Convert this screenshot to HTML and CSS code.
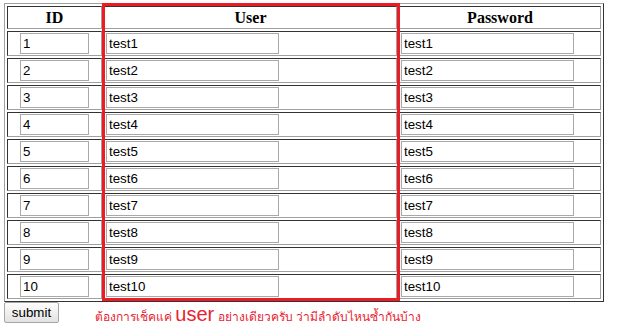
FILE: index.html
```html
<!DOCTYPE html>
<html lang="th">
<head>
    <meta charset="UTF-8">
    <title>check user</title>
    <link rel="stylesheet" href="styles.css">
</head>
<body>
    <form class="page">
        <table class="grid">
            <colgroup>
                <col class="col-id">
                <col class="col-user">
                <col class="col-pass">
            </colgroup>
            <tr>
                <th>ID</th>
                <th>User</th>
                <th>Password</th>
            </tr>
            <tr><td class="c-id"><input class="in-id" value="1"></td><td><input class="in-text" value="test1"></td><td><input class="in-text" value="test1"></td></tr>
            <tr><td class="c-id"><input class="in-id" value="2"></td><td><input class="in-text" value="test2"></td><td><input class="in-text" value="test2"></td></tr>
            <tr><td class="c-id"><input class="in-id" value="3"></td><td><input class="in-text" value="test3"></td><td><input class="in-text" value="test3"></td></tr>
            <tr><td class="c-id"><input class="in-id" value="4"></td><td><input class="in-text" value="test4"></td><td><input class="in-text" value="test4"></td></tr>
            <tr><td class="c-id"><input class="in-id" value="5"></td><td><input class="in-text" value="test5"></td><td><input class="in-text" value="test5"></td></tr>
            <tr><td class="c-id"><input class="in-id" value="6"></td><td><input class="in-text" value="test6"></td><td><input class="in-text" value="test6"></td></tr>
            <tr><td class="c-id"><input class="in-id" value="7"></td><td><input class="in-text" value="test7"></td><td><input class="in-text" value="test7"></td></tr>
            <tr><td class="c-id"><input class="in-id" value="8"></td><td><input class="in-text" value="test8"></td><td><input class="in-text" value="test8"></td></tr>
            <tr><td class="c-id"><input class="in-id" value="9"></td><td><input class="in-text" value="test9"></td><td><input class="in-text" value="test9"></td></tr>
            <tr><td class="c-id"><input class="in-id" value="10"></td><td><input class="in-text" value="test10"></td><td><input class="in-text" value="test10"></td></tr>
        </table>

        <div class="bottom">
            <button type="button" class="submit">submit</button>
            <span class="note">ต้องการเช็คแค่ <span class="big">user</span> อย่างเดียวครับ ว่ามีลำดับไหนซ้ำกันบ้าง</span>
        </div>

        <!-- red marker drawn over the User column -->
        <div class="marker"></div>
    </form>
</body>
</html>
```

FILE: styles.css
```css
body { margin: 0; background: #fff; font-family: "Liberation Sans", Arial, sans-serif; }
.page { position: relative; padding: 3px 0 0 4px; margin: 0; }

.grid { border-collapse: separate; border-spacing: 2px; border: 1px solid; border-color: #a0a0a0 #333 #333 #a0a0a0; table-layout: fixed; width: 600px; }
.col-id { width: 95px; }
.col-user { width: 293px; }
.col-pass { width: 202px; }

.grid th, .grid td { border: 1px solid; border-color: #333 #a0a0a0 #a0a0a0 #333; padding: 1px; text-align: left; }
.grid th { font-family: "Liberation Serif", "Times New Roman", serif; font-size: 16px; font-weight: bold; line-height: 19px; text-align: center; color: #000; }
.grid td { height: 21px; line-height: 0; }
.grid td.c-id { text-align: center; }

input { box-sizing: border-box; height: 21px; margin: 0; padding: 0 2px; border: 1px solid #a9a9a9; font-family: "Liberation Sans", Arial, sans-serif; font-size: 13.33px; color: #000; background: #fff; vertical-align: top; }
.in-id { width: 69px; }
.in-text { width: 173px; }

.bottom { display: flex; align-items: flex-start; }
.submit { box-sizing: border-box; height: 21px; width: 55px; padding: 0 6px; border: 1px solid #a6a6a6; border-radius: 2px; background: linear-gradient(#fdfdfd, #e2e2e2); font-family: "Liberation Sans", Arial, sans-serif; font-size: 13.33px; color: #000; }
.note { margin-left: 36px; padding-top: 2px; color: #e8232f; font-size: 12px; line-height: 21px; }
.note .big { font-size: 20px; line-height: 1; }

.marker { position: absolute; left: 102px; top: 3px; width: 298px; height: 298px; box-sizing: border-box; border: 3px solid #ed1c24; pointer-events: none; }
```
